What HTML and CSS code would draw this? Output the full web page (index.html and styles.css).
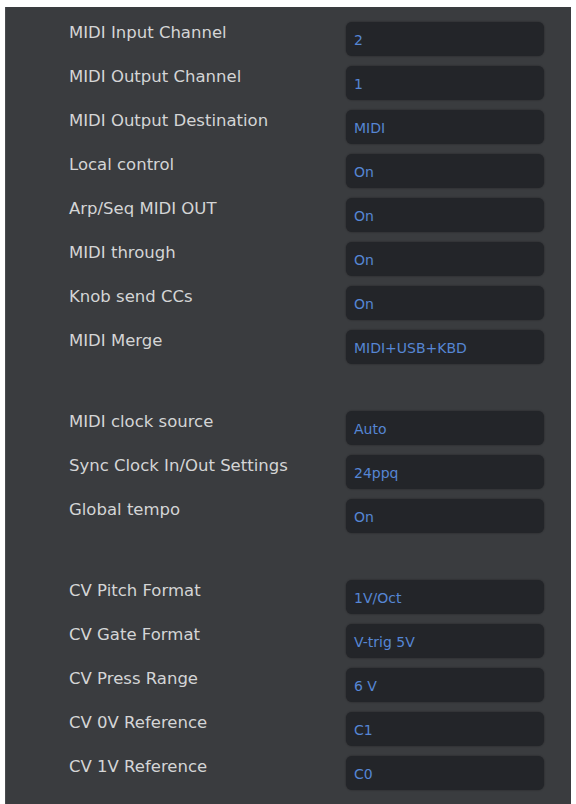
FILE: index.html
```html
<!DOCTYPE html>
<html>
<head>
<meta charset="utf-8">
<link rel="stylesheet" href="styles.css">
</head>
<body>
<div class="panel">
  <div class="group">
    <div class="label">MIDI Input Channel</div><div class="field">2</div>
    <div class="label">MIDI Output Channel</div><div class="field">1</div>
    <div class="label">MIDI Output Destination</div><div class="field">MIDI</div>
    <div class="label">Local control</div><div class="field">On</div>
    <div class="label">Arp/Seq MIDI OUT</div><div class="field">On</div>
    <div class="label">MIDI through</div><div class="field">On</div>
    <div class="label">Knob send CCs</div><div class="field">On</div>
    <div class="label">MIDI Merge</div><div class="field">MIDI+USB+KBD</div>
  </div>
  <div class="group">
    <div class="label">MIDI clock source</div><div class="field">Auto</div>
    <div class="label">Sync Clock In/Out Settings</div><div class="field">24ppq</div>
    <div class="label">Global tempo</div><div class="field">On</div>
  </div>
  <div class="group">
    <div class="label">CV Pitch Format</div><div class="field">1V/Oct</div>
    <div class="label">CV Gate Format</div><div class="field">V-trig 5V</div>
    <div class="label">CV Press Range</div><div class="field">6 V</div>
    <div class="label">CV 0V Reference</div><div class="field">C1</div>
    <div class="label">CV 1V Reference</div><div class="field">C0</div>
  </div>
</div>
</body>
</html>
```

FILE: styles.css
```css
html, body {
  margin: 0;
  padding: 0;
  background: #ffffff;
  overflow: hidden;
}
body {
  padding: 7px 5px 0 5px;
  font-family: "DejaVu Sans", "Liberation Sans", sans-serif;
}
.panel {
  background: #3a3c3f;
  border-left: 1px solid #4a4c4f;
  min-height: 820px;
  padding: 15px 0 0 63px;
  display: flex;
  flex-direction: column;
  gap: 47px;
  box-sizing: border-box;
}
.group {
  display: grid;
  grid-template-columns: 277px 198px;
  grid-auto-rows: 34px;
  row-gap: 10px;
}
.label {
  color: #d4d5d6;
  font-size: 16.5px;
  line-height: 20px;
  padding-top: 1px;
  white-space: nowrap;
}
.field {
  background: #232529;
  border-radius: 6px;
  box-shadow: 0 0 2px rgba(0, 0, 0, 0.45);
  color: #5686d4;
  font-size: 14px;
  display: flex;
  align-items: center;
  padding-left: 8px;
  padding-top: 1px;
  box-sizing: border-box;
}
```
